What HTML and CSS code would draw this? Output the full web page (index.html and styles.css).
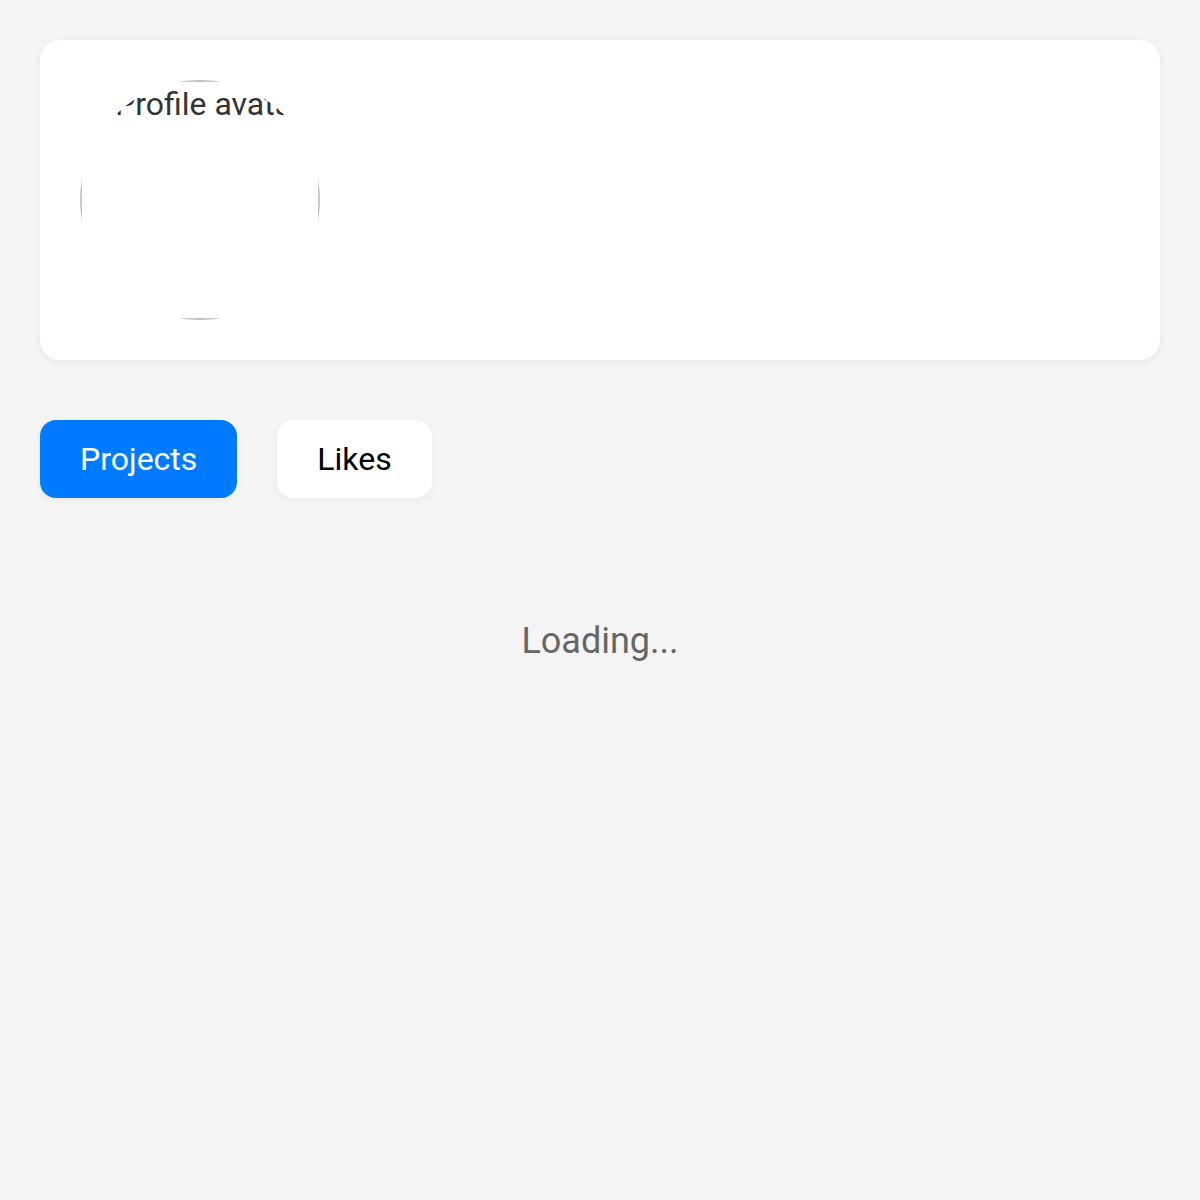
FILE: index.html
```html
<!DOCTYPE html>
<html>
<head>
<meta charset="utf-8">
<link rel="stylesheet" href="styles.css">
</head>
<body>
<div class="page">
  <div class="profile-card">
    <div class="avatar" role="img" aria-label="Profile avatar">
      <div class="avatar-frame"><span class="avatar-alt">Profile avatar</span></div>
    </div>
  </div>
  <div class="tabs">
    <button class="tab tab-active">Projects</button>
    <button class="tab">Likes</button>
  </div>
  <div class="loading">Loading...</div>
</div>
</body>
</html>
```
FILE: styles.css
```css
html, body {
  margin: 0;
  padding: 0;
  background: #f5f5f5;
  font-family: Roboto, "Noto Sans", Arial, sans-serif;
}
.page {
  padding: 40px;
}
.profile-card {
  background: #ffffff;
  border-radius: 20px;
  padding: 40px;
  box-shadow: 0 2px 8px rgba(0, 0, 0, 0.06);
}
.avatar {
  width: 240px;
  height: 240px;
  border-radius: 50%;
  overflow: hidden;
}
.avatar-frame {
  width: 100%;
  height: 100%;
  box-sizing: border-box;
  border: 2px solid #c4c4c4;
  padding: 3px 0 0 33px;
  white-space: nowrap;
  overflow: hidden;
}
.avatar-alt {
  font-size: 32px;
  color: #333333;
  line-height: 38px;
}
.tabs {
  display: flex;
  gap: 40px;
  margin-top: 60px;
}
.tab {
  font-family: Roboto, "Noto Sans", Arial, sans-serif;
  font-size: 32px;
  line-height: 38px;
  padding: 20px 40px;
  border: none;
  border-radius: 16px;
  background: #ffffff;
  color: #000000;
  box-shadow: 0 2px 8px rgba(0, 0, 0, 0.05);
}
.tab-active {
  background: #007bff;
  color: #ffffff;
}
.loading {
  text-align: center;
  color: #666666;
  font-size: 36px;
  line-height: 42px;
  margin-top: 122px;
}
```
